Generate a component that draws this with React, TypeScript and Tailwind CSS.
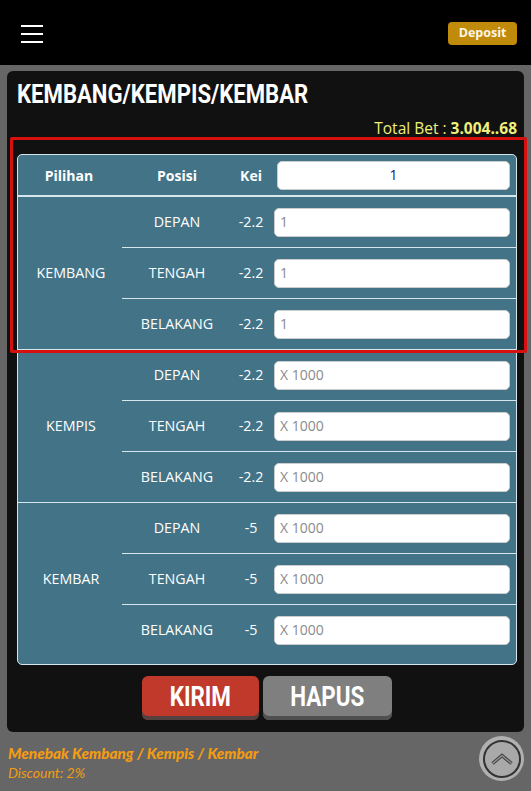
const groups = [
  { nama: "KEMBANG", kei: "-2.2", placeholder: "1" },
  { nama: "KEMPIS", kei: "-2.2", placeholder: "X 1000" },
  { nama: "KEMBAR", kei: "-5", placeholder: "X 1000" },
];

const posisi = ["DEPAN", "TENGAH", "BELAKANG"];

function Baris({ label, kei, placeholder, last }: { label: string; kei: string; placeholder: string; last: boolean }) {
  return (
    <div className={last ? "flex h-[50px] items-center" : "flex h-[51px] items-center border-b border-[#d5e6ec]"}>
      <div className="w-[110px] text-center text-[14.25px]">{label}</div>
      <div className="w-[38px] text-center text-[14.25px]">{kei}</div>
      <input
        className="ml-[4px] h-[29px] w-[236px] rounded-[5px] border border-[#ccc] bg-white px-[5px] pb-[2px] text-[14px] placeholder:text-[#8a8a8a]"
        placeholder={placeholder}
        readOnly
      />
    </div>
  );
}

export default function App() {
  return (
    <div className="relative h-[791px] w-[531px] overflow-hidden bg-[#666] font-['Open_Sans',sans-serif] text-white">
      <header className="flex h-[65px] items-center justify-between bg-black pl-[21px] pr-[14px]">
        <div className="mt-[2px] flex h-[18px] w-[22px] flex-col justify-between">
          <span className="h-[2px] bg-white" />
          <span className="h-[2px] bg-white" />
          <span className="h-[2px] bg-white" />
        </div>
        <button className="mt-[1px] h-[23px] w-[69px] rounded-[4px] bg-[#c08a0a] text-[12.5px] font-bold text-[#fdf6e3]">
          Deposit
        </button>
      </header>

      <main className="relative mx-[7px] mt-[6px] h-[661px] rounded-[6px] bg-[#111] pr-[7px] pl-[10px]">
        <h1 className="origin-left scale-x-[0.885] pt-[9px] font-['Roboto',sans-serif] text-[25px] leading-[30px] font-bold whitespace-nowrap">
          KEMBANG/KEMPIS/KEMBAR
        </h1>
        <p className="mt-[8px] text-right text-[15.5px] leading-[20px] text-[#efef7a]">
          Total Bet : <b className="font-bold">3.004..68</b>
        </p>

        <section className="mt-[16px] overflow-hidden rounded-[5px] border border-[#d5e6ec] bg-[#437387]">
          <div className="flex h-[42px] items-center border-b-2 border-[#d5e6ec]">
            <div className="w-[102px] text-center text-[14px] font-bold">Pilihan</div>
            <div className="w-[114px] text-center text-[14px] font-bold">Posisi</div>
            <div className="w-[34px] text-center text-[14px] font-bold">Kei</div>
            <input
              className="ml-[9px] h-[29px] w-[233px] rounded-[5px] border border-[#ccc] bg-white pb-[2px] text-center text-[14px] text-[#1a1a6e]"
              value="1"
              readOnly
            />
          </div>
          {groups.map((g, i) => (
            <div
              key={g.nama}
              className={i < 2 ? "flex h-[153px] items-start border-b border-[#d5e6ec]" : "flex h-[161px] items-start"}
            >
              <div className="flex h-[152px] w-[104px] items-center justify-center pl-[2px] text-[14.25px]">{g.nama}</div>
              <div className="w-[394px]">
                {posisi.map((p, j) => (
                  <Baris key={p} label={p} kei={g.kei} placeholder={g.placeholder} last={j === 2} />
                ))}
              </div>
            </div>
          ))}
        </section>

        <div className="mt-[11px] flex justify-center gap-[4px]">
          <button className="h-[44px] w-[117px] rounded-[6px] bg-[#c0392b] pb-[4px] font-['Roboto',sans-serif] text-[28px] font-bold shadow-[inset_0_-4px_0_#55413f]">
            <span className="inline-block scale-x-[0.8]">KIRIM</span>
          </button>
          <button className="h-[44px] w-[129px] rounded-[6px] bg-[#7f7f7f] pb-[4px] font-['Roboto',sans-serif] text-[28px] font-bold shadow-[inset_0_-4px_0_#4f4f4f]">
            <span className="inline-block scale-x-[0.8]">HAPUS</span>
          </button>
        </div>
      </main>

      <footer className="px-[8px] pt-[11px] font-['Lato',sans-serif] leading-[20px] text-[#f39c12] italic">
        <p className="text-[15.3px] font-black">Menebak Kembang / Kempis / Kembar</p>
        <p className="text-[14px]">Discount: 2%</p>
      </footer>

      <button className="absolute top-[736px] left-[479px] flex size-[45px] items-center justify-center rounded-full bg-[#b0b0b0]">
        <span className="flex size-[38px] items-center justify-center rounded-full border-2 border-[#333] bg-[#a9a9a9]">
          <svg width="22" height="12" viewBox="0 0 22 12" fill="none">
            <path d="M1.5 10.5 11 2.5l9.5 8" stroke="#444" strokeWidth="3.5" />
            <path d="M1.5 10.5 11 2.5l9.5 8" stroke="#999" strokeWidth="1.2" />
          </svg>
        </span>
      </button>

      <div className="absolute top-[137px] left-[10px] h-[216px] w-[517px] rounded-[2px] border-[3px] border-[#d60f0f]" />
    </div>
  );
}
